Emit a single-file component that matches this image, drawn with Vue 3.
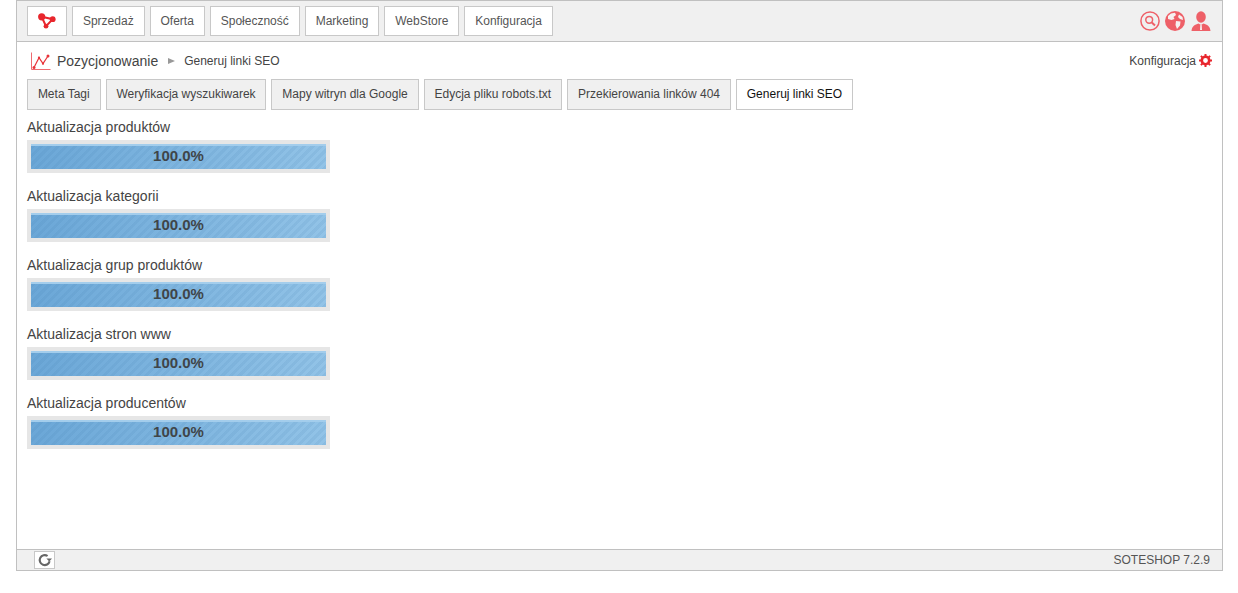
<script setup>
const menu = ['Sprzedaż', 'Oferta', 'Społeczność', 'Marketing', 'WebStore', 'Konfiguracja']
const tabs = ['Meta Tagi', 'Weryfikacja wyszukiwarek', 'Mapy witryn dla Google', 'Edycja pliku robots.txt', 'Przekierowania linków 404', 'Generuj linki SEO']
const rows = ['Aktualizacja produktów', 'Aktualizacja kategorii', 'Aktualizacja grup produktów', 'Aktualizacja stron www', 'Aktualizacja producentów']
</script>

<template>
  <div class="frame">
    <header class="top">
      <nav class="menu">
        <a class="btn logo">
          <svg width="20" height="16" viewBox="0 0 20 16">
            <path d="M4.7 3.8 L15.7 6.2 L9 13.2 Z" fill="none" stroke="#e8262d" stroke-width="2" />
            <circle cx="4.7" cy="3.8" r="3.6" fill="#e8262d" />
            <circle cx="15.7" cy="6.2" r="2.9" fill="#e8262d" />
            <circle cx="9" cy="13.2" r="2.4" fill="#e8262d" />
          </svg>
        </a>
        <a v-for="m in menu" :key="m" class="btn">{{ m }}</a>
      </nav>
      <div class="tools">
        <svg width="20" height="20" viewBox="0 0 20 20">
          <circle cx="10" cy="10" r="9.1" fill="none" stroke="#ee6068" stroke-width="1.5" />
          <circle cx="9.2" cy="8.8" r="3.4" fill="none" stroke="#ee6068" stroke-width="1.5" />
          <path d="M11.8 11.4 L15 14.4" stroke="#ee6068" stroke-width="2" />
        </svg>
        <svg width="20" height="20" viewBox="0 0 20 20">
          <circle cx="10" cy="10" r="10" fill="#ee6068" />
          <path d="M6 2.5 L10 1.8 L11 4 L8.5 6 L9.5 8 L6.5 9 L3 8 L3 5 Z M11 10 L15.5 10.5 L15 14.5 L12 18 L10.5 14 Z M14 3.5 L17.5 6 L18 9 L15 8 L13 6 Z" fill="#f6f1f1" />
        </svg>
        <svg class="person" width="20" height="21" viewBox="0 0 20 21">
          <ellipse cx="10" cy="6" rx="4.8" ry="5.8" fill="#ee6068" />
          <path d="M0.5 20 C1 15 4 13.5 7.5 12.5 L10 14 L12.5 12.5 C16 13.5 19 15 19.5 20 Z" fill="#ee6068" />
          <path d="M9.3 14 H10.7 L11 19 H9 Z" fill="#f6f1f1" />
        </svg>
      </div>
    </header>

    <main class="body">
      <div class="crumbs">
        <div class="path">
          <svg class="chart" width="22" height="20" viewBox="0 0 22 20">
            <path d="M1.5 1.5 V18.5 H20.5" fill="none" stroke="#ee6a70" stroke-width="1" />
            <path d="M4 16.5 L9 6.7 L13 12.7 L18 5" fill="none" stroke="#e8343a" stroke-width="1.2" />
            <circle cx="4" cy="16.5" r="1.5" fill="#e8343a" />
            <circle cx="9" cy="6.7" r="1.1" fill="#e8343a" />
            <circle cx="13" cy="12.7" r="1.1" fill="#e8343a" />
            <circle cx="18" cy="5" r="1.5" fill="#e8343a" />
          </svg>
          <span class="title">Pozycjonowanie</span>
          <i class="arrow"></i>
          <span class="current">Generuj linki SEO</span>
        </div>
        <a class="config">
          Konfiguracja
          <svg width="13" height="13" viewBox="0 0 13 13">
            <circle cx="6.5" cy="6.5" r="3.7" fill="none" stroke="#e8262d" stroke-width="2.6" />
            <path d="M6.5 0 V13 M0 6.5 H13 M1.9 1.9 L11.1 11.1 M11.1 1.9 L1.9 11.1" stroke="#e8262d" stroke-width="2" stroke-dasharray="2.4 8.2 2.4" />
          </svg>
        </a>
      </div>

      <div class="tabs">
        <a v-for="(t, i) in tabs" :key="t" class="tab" :class="{ active: i === tabs.length - 1 }">{{ t }}</a>
      </div>

      <section class="list">
        <div v-for="r in rows" :key="r" class="row">
          <div class="label">{{ r }}</div>
          <div class="progress">
            <div class="bar">100.0%</div>
          </div>
        </div>
      </section>
    </main>

    <footer class="foot">
      <a class="refresh">
        <svg width="14" height="14" viewBox="0 0 14 14">
          <path d="M11.6 8.2 A5 5 0 1 1 9.6 3" fill="none" stroke="#666" stroke-width="2.1" />
          <path d="M8.4 5.4 H14 L11.2 8.6 Z" fill="#666" />
        </svg>
      </a>
      <span class="version">SOTESHOP 7.2.9</span>
    </footer>
  </div>
</template>

<style>
html, body { margin: 0; background: #fff; }
</style>

<style scoped>
.frame {
  box-sizing: border-box;
  width: 1207px;
  height: 571px;
  margin-left: 16px;
  border: 1px solid #c0c0c0;
  display: flex;
  flex-direction: column;
  font-family: "Liberation Sans", Arial, sans-serif;
  color: #444;
}
.top {
  box-sizing: border-box;
  height: 41px;
  flex: none;
  background: #f0f0f0;
  border-bottom: 1px solid #c0c0c0;
  display: flex;
  align-items: flex-start;
  justify-content: space-between;
  padding: 5px 0 0 10px;
}
.menu { display: flex; gap: 5px; }
.btn {
  box-sizing: border-box;
  height: 30px;
  padding: 0 9.95px;
  background: #fff;
  border: 1px solid #c8c8c8;
  font-size: 12px;
  line-height: 28px;
  color: #555;
}
.logo { width: 40px; padding: 0; display: flex; align-items: center; justify-content: center; }
.tools { display: flex; align-items: center; gap: 5px; padding: 4px 0 0; margin-right: 11px; height: 22px; }
.person { margin-left: 1px; }
.body { flex: 1; min-height: 0; padding: 0 10px; }
.crumbs {
  display: flex;
  justify-content: space-between;
  align-items: center;
  height: 37px;
  padding-left: 3px;
}
.path { display: flex; align-items: center; }
.chart { margin-right: 5px; }
.title { font-size: 14px; color: #444; }
.arrow {
  width: 0;
  height: 0;
  margin: 1px 9px 0 10px;
  border-left: 7px solid #999;
  border-top: 3.5px solid transparent;
  border-bottom: 3.5px solid transparent;
}
.current { font-size: 12px; color: #444; }
.config { display: flex; align-items: center; gap: 3px; font-size: 12px; color: #444; }
.tabs { display: flex; gap: 5px; }
.tab {
  box-sizing: border-box;
  height: 31px;
  padding: 0 9.88px;
  background: #f0f0f0;
  border: 1px solid #c8c8c8;
  font-size: 12px;
  line-height: 29px;
  color: #444;
}
.tab.active { background: #fff; color: #111; }
.list { padding-top: 9px; }
.row { height: 69px; }
.label { font-size: 14px; line-height: 16px; color: #444; margin-bottom: 5px; }
.progress {
  box-sizing: border-box;
  width: 303px;
  height: 33px;
  padding: 4px;
  background: #e6e6e6;
}
.bar {
  box-sizing: border-box;
  height: 25px;
  text-align: center;
  font-size: 15px;
  font-weight: bold;
  line-height: 20px;
  color: #3f4549;
  border-top: 2px solid #a3cdec;
  background:
    repeating-linear-gradient(-45deg, rgba(60,120,170,.1) 0 3px, rgba(60,120,170,0) 3px 6px),
    linear-gradient(90deg, #6ba7d7, #92c3e7);
}
.foot {
  box-sizing: border-box;
  height: 21px;
  flex: none;
  background: #f0f0f0;
  border-top: 1px solid #c0c0c0;
  display: flex;
  justify-content: space-between;
  align-items: center;
  padding: 0 12px 0 17px;
}
.refresh {
  box-sizing: border-box;
  width: 21px;
  height: 18px;
  background: #fff;
  border: 1px solid #c8c8c8;
  display: flex;
  align-items: center;
  justify-content: center;
}
.version { font-size: 12px; color: #555; }
</style>
